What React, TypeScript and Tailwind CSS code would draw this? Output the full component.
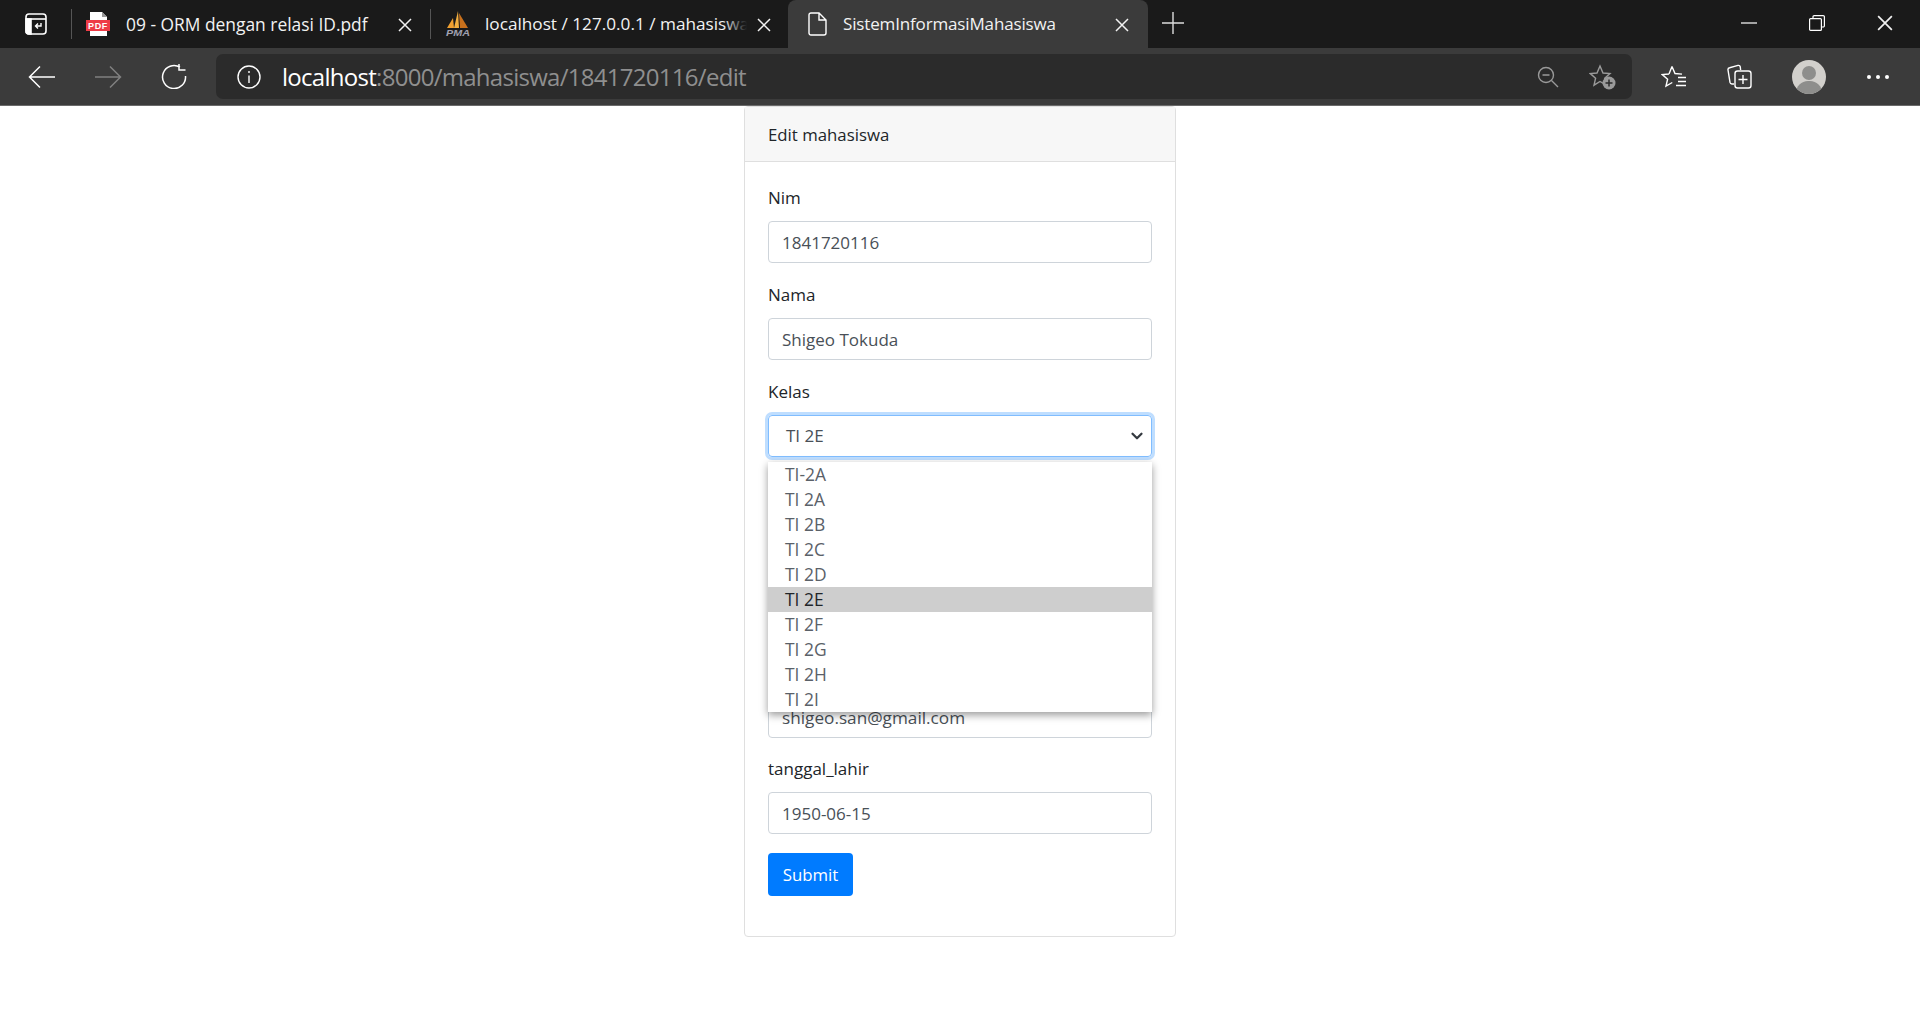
import { ChevronDown } from 'lucide-react';

const options = ['TI-2A', 'TI 2A', 'TI 2B', 'TI 2C', 'TI 2D', 'TI 2E', 'TI 2F', 'TI 2G', 'TI 2H', 'TI 2I'];

function CloseX({ className }: { className: string }) {
  return (
    <svg width="14" height="14" viewBox="0 0 14 14" className={className} fill="none" stroke="currentColor" strokeWidth="1.5">
      <path d="M1 1l12 12M13 1L1 13" />
    </svg>
  );
}

function PdfIcon() {
  return (
    <svg width="24" height="26" viewBox="0 0 24 26" className="shrink-0">
      <path d="M4 1h12l5 5v19H4z" fill="#fff" />
      <path d="M16 1v5h5" fill="#999" />
      <rect x="0" y="9" width="24" height="11" fill="#ee3b46" />
      <text x="12" y="18" textAnchor="middle" fontSize="9" fontWeight="700" fill="#fff" fontFamily="Liberation Sans, sans-serif" letterSpacing="0.6">PDF</text>
    </svg>
  );
}

function PmaIcon() {
  return (
    <svg width="26" height="26" viewBox="0 0 26 26" className="shrink-0">
      <path d="M2 17L8 7l1 10z" fill="#f0a030" />
      <path d="M9 17L13 0l1 17z" fill="#f4b040" />
      <path d="M15 17L14 2l9 15z" fill="#c8701c" />
      <text x="13" y="24.5" textAnchor="middle" fontSize="9.5" fontWeight="700" fontStyle="italic" fill="#a0a0b0" fontFamily="Liberation Sans, sans-serif" textLength="24" lengthAdjust="spacingAndGlyphs">PMA</text>
    </svg>
  );
}

function Tabs() {
  return (
    <div className="flex h-[48px] items-stretch bg-[#1a1a1a] text-[#f2f2f2]">
      <div className="flex w-[71px] shrink-0 items-center pl-[25px]">
        <svg width="22" height="22" viewBox="0 0 22 22" fill="none" stroke="#fff" strokeWidth="1.6">
          <rect x="1" y="1" width="20" height="20" rx="3" />
          <path d="M1 6h20" />
          <path d="M1 6h5v15H4a3 3 0 01-3-3z" fill="#fff" />
          <path d="M16 10v3h-5M13 10.5L10.5 13l2.5 2.5" strokeWidth="1.4" />
        </svg>
      </div>
      <div className="my-[9px] w-px bg-[#555]" />
      <div className="flex w-[358px] items-center pl-[14px]">
        <PdfIcon />
        <span className="ml-[16px] text-[17.4px]">09 - ORM dengan relasi ID.pdf</span>
        <CloseX className="ml-auto mr-[18px] mt-px" />
      </div>
      <div className="my-[9px] w-px bg-[#555]" />
      <div className="flex w-[357px] items-center pl-[14px]">
        <PmaIcon />
        <div className="relative ml-[14px] w-[262px] overflow-hidden whitespace-nowrap text-[17.2px]">
          localhost / 127.0.0.1 / mahasiswa
          <div className="absolute inset-y-0 right-0 w-[24px] bg-gradient-to-r from-transparent to-[#1a1a1a]" />
        </div>
        <CloseX className="ml-auto mr-[17px] mt-px" />
      </div>
      <div className="flex w-[360px] items-center rounded-t-[8px] bg-[#3b3b3b] pl-[20px]">
        <svg width="19" height="24" viewBox="0 0 19 24" fill="none" stroke="#fff" strokeWidth="1.4" className="shrink-0">
          <path d="M3 1h8l7 7v13a2 2 0 01-2 2H3a2 2 0 01-2-2V3a2 2 0 012-2zM11 1v7h7" />
        </svg>
        <span className="ml-[16px] text-[17px] tracking-[-0.15px]">SistemInformasiMahasiswa</span>
        <CloseX className="ml-auto mr-[19px] mt-px" />
      </div>
      <div className="flex w-[50px] items-center justify-center pb-[2px]">
        <svg width="22" height="22" viewBox="0 0 22 22" stroke="#ddd" strokeWidth="1.4">
          <path d="M11 0v22M0 11h22" />
        </svg>
      </div>
      <div className="ml-auto flex items-center pb-[3px]">
        <svg width="16" height="2" viewBox="0 0 16 2" stroke="#fff" strokeWidth="1.2" className="mr-[52px]">
          <path d="M0 1h16" />
        </svg>
        <svg width="16" height="16" viewBox="0 0 16 16" fill="none" stroke="#fff" strokeWidth="1.2" className="mr-[52px]">
          <rect x="0.6" y="3.6" width="11.8" height="11.8" rx="1" />
          <path d="M4 3.4V1.8A1.2 1.2 0 015.2.6h9a1.2 1.2 0 011.2 1.2v9a1.2 1.2 0 01-1.2 1.2h-1.6" />
        </svg>
        <CloseX className="mr-[27px] h-[16px] w-[16px]" />
      </div>
    </div>
  );
}

function Toolbar() {
  return (
    <div className="flex h-[58px] items-center border-b border-[#6a6a6a] bg-[#3b3b3b]">
      <svg width="28" height="24" viewBox="0 0 28 24" fill="none" stroke="#fff" strokeWidth="1.5" className="ml-[28px]">
        <path d="M27 12H2M12 1.5L1.5 12 12 22.5" />
      </svg>
      <svg width="28" height="24" viewBox="0 0 28 24" fill="none" stroke="#808080" strokeWidth="1.5" className="ml-[38px]">
        <path d="M1 12h25M16 1.5L26.5 12 16 22.5" />
      </svg>
      <svg width="26" height="26" viewBox="0 0 26 26" fill="none" stroke="#fff" strokeWidth="1.5" className="ml-[39px] mb-[2px]">
        <path d="M19 4.2A11.5 11.5 0 1024.5 13M18 1v6h6.5" />
      </svg>
      <div className="ml-[29px] flex h-[45px] w-[1416px] items-center rounded-[7px] bg-[#2b2b2b]">
        <svg width="24" height="24" viewBox="0 0 24 24" fill="none" stroke="#fff" strokeWidth="1.4" className="ml-[21px]">
          <circle cx="12" cy="12" r="11" />
          <path d="M12 10.5V18M12 6v2" />
        </svg>
        <span className="ml-[21px] text-[24px] tracking-[-0.72px] text-white">
          localhost<span className="text-[#8f8f8f]">:8000/mahasiswa/1841720116/edit</span>
        </span>
        <svg width="22" height="22" viewBox="0 0 22 22" fill="none" stroke="#9a9a9a" strokeWidth="1.4" className="ml-auto">
          <circle cx="9" cy="9" r="7.5" />
          <path d="M14.5 14.5L21 21M5.5 9h7" />
        </svg>
        <svg width="28" height="26" viewBox="0 0 28 26" className="ml-[30px] mr-[15px]">
          <path d="M11 2l3 7 7 .6-5.3 4.6 1.6 7-6.3-3.7L5 21.2l1.6-7L1.3 9.6 8 9z" fill="none" stroke="#9a9a9a" strokeWidth="1.4" />
          <circle cx="20" cy="19" r="6.5" fill="#9a9a9a" />
          <path d="M20 15.5v7M16.5 19h7" stroke="#2b2b2b" strokeWidth="1.5" />
        </svg>
      </div>
      <svg width="26" height="24" viewBox="0 0 26 24" fill="none" stroke="#fff" strokeWidth="1.4" className="ml-[29px]">
        <path d="M11 1.5l3 7 7 .6M8 9l-6.7.6 5.3 4.6-1.6 7 6.3-3.7M8 9l3-7.5M17 12.5h8M17 16.5h8M15 20.5h10" />
      </svg>
      <svg width="25" height="25" viewBox="0 0 25 25" fill="none" stroke="#fff" strokeWidth="1.4" className="ml-[40px]">
        <path d="M7 20H5a2 2 0 01-2-1.6L1 6a2 2 0 011.6-2.3L11 1.4a2 2 0 012.3 1.6l.3 3" />
        <rect x="8" y="7" width="16" height="17" rx="2.5" />
        <path d="M16 11v9M11.5 15.5h9" />
      </svg>
      <div className="relative ml-[40px] h-[34px] w-[34px] overflow-hidden rounded-full bg-[#d2d0cc]">
        <div className="absolute left-[10px] top-[6px] h-[14px] w-[14px] rounded-full bg-[#8e8e8c]" />
        <div className="absolute left-[4px] top-[21px] h-[24px] w-[26px] rounded-full bg-[#8e8e8c]" />
      </div>
      <div className="ml-[41px] flex gap-[5px]">
        <div className="h-[4px] w-[4px] rounded-full bg-white" />
        <div className="h-[4px] w-[4px] rounded-full bg-white" />
        <div className="h-[4px] w-[4px] rounded-full bg-white" />
      </div>
    </div>
  );
}

function Field({ label, value, className }: { label: string; value: string; className: string }) {
  return (
    <div className={className}>
      <label className="mb-[10px] block h-[26px] text-[17px] leading-[26px]">{label}</label>
      <div className="flex h-[42px] items-center rounded-[4px] border border-[#ced4da] px-[13px] pt-[1px] text-[17px] text-[#495057]">
        {value}
      </div>
    </div>
  );
}

export default function App() {
  return (
    <div className="h-screen overflow-hidden bg-white font-['Open_Sans',sans-serif]">
      <Tabs />
      <Toolbar />
      <div className="mx-auto w-[432px] rounded-[4px] border border-[#dfdfdf] text-[#212529]">
        <div className="flex h-[55px] items-center border-b border-[#dfdfdf] bg-[#f7f7f7] px-[23px] pt-px text-[16.8px]">
          Edit mahasiswa
        </div>
        <div className="px-[23px] pb-[40px] pt-[23px]">
          <Field label="Nim" value="1841720116" className="mb-[19px]" />
          <Field label="Nama" value="Shigeo Tokuda" className="mb-[19px]" />
          <div className="relative mb-[239px]">
            <label className="mb-[10px] block h-[26px] text-[17px] leading-[26px]">Kelas</label>
            <div className="flex h-[42px] items-center justify-between rounded-[4px] border border-[#80bdff] pl-[17px] pr-[5px] text-[17px] text-[#495057] shadow-[0_0_0_3px_rgba(0,123,255,0.25)]">
              TI 2E
              <ChevronDown size={18} strokeWidth={3} className="text-[#343a40]" />
            </div>
            <div className="absolute left-0 top-[83px] z-10 h-[250px] w-[384px] overflow-hidden bg-white text-[17.4px] text-[#5a6168] shadow-[0_3px_8px_rgba(0,0,0,0.4)]">
              {options.map((o) => (
                <div
                  key={o}
                  className={
                    o === 'TI 2E'
                      ? 'h-[25px] bg-[#cecece] pl-[17px] leading-[25px] text-[#212529]'
                      : 'h-[25px] pl-[17px] leading-[25px]'
                  }
                >
                  {o}
                </div>
              ))}
            </div>
          </div>
          <div className="mb-[18px] flex h-[42px] items-center rounded-[4px] border border-[#ced4da] px-[13px] pt-[1px] text-[17.2px] text-[#495057]">
            shigeo.san@gmail.com
          </div>
          <Field label="tanggal_lahir" value="1950-06-15" className="mb-[19px]" />
          <button className="h-[43px] w-[85px] rounded-[4px] bg-[#007bff] text-[16.8px] text-white">Submit</button>
        </div>
      </div>
    </div>
  );
}
